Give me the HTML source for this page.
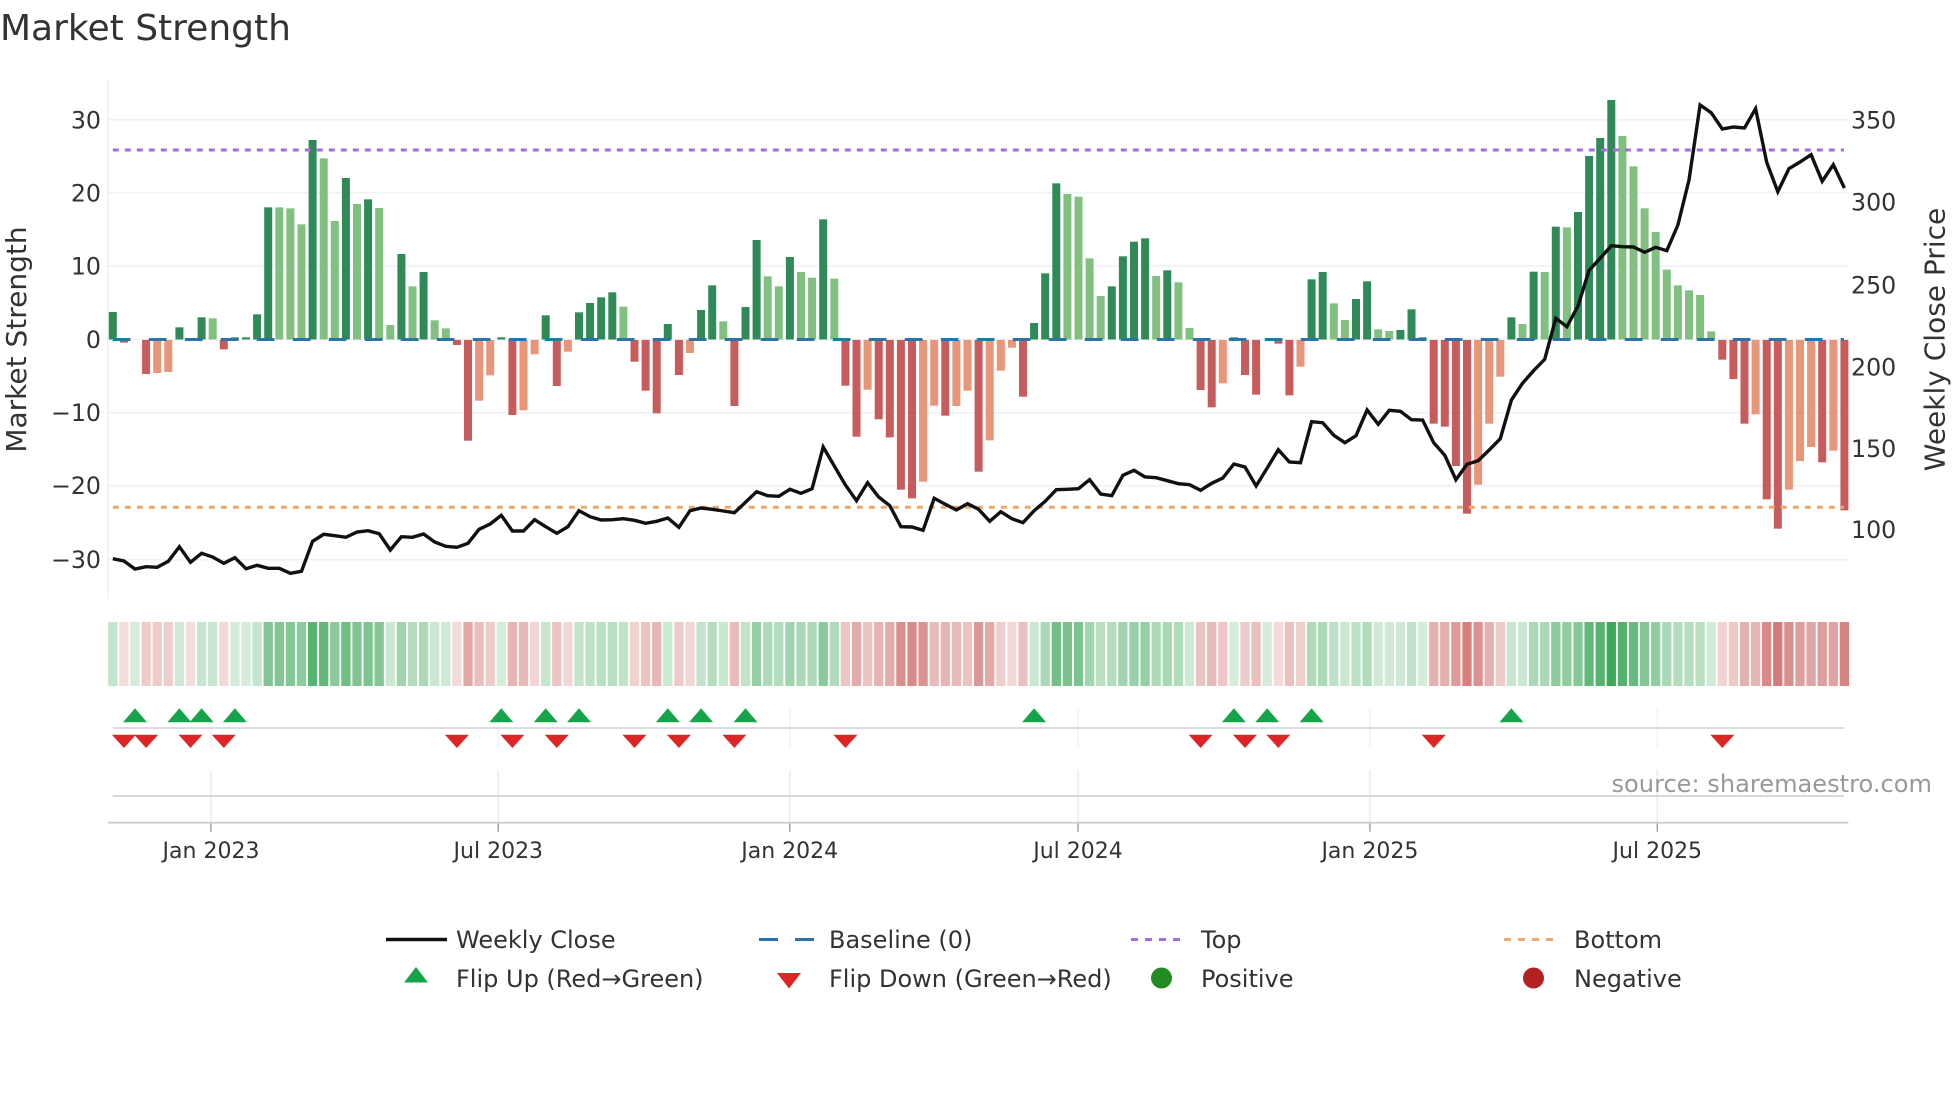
<!DOCTYPE html>
<html>
<head>
<meta charset="utf-8">
<title>Market Strength</title>
<style>
html,body{margin:0;padding:0;background:#fff;width:1960px;height:1102px;overflow:hidden}
svg{display:block}
text{font-family:"DejaVu Sans","Liberation Sans",sans-serif;fill:#333}
.yt{font-size:23.7px}
.xt{font-size:22px;text-anchor:middle}
.lg{font-size:24px}
</style>
</head>
<body>
<svg id="c" xmlns="http://www.w3.org/2000/svg" width="1960" height="1102" viewBox="0 0 1960 1102">
<rect width="1960" height="1102" fill="#fff"/>
<g id="grid"></g>
<g id="bars"></g>
<line x1="112.8" x2="1844" y1="339.5" y2="339.5" stroke="#2a75a8" stroke-width="2.9" stroke-dasharray="17.7 18.3"/>
<line x1="112.8" x2="1844" y1="150" y2="150" stroke="#a56cdc" stroke-width="3" stroke-dasharray="6 6"/>
<line x1="112.8" x2="1844" y1="507.3" y2="507.3" stroke="#eba86f" stroke-width="3" stroke-dasharray="6 6"/>
<polyline id="price" fill="none" stroke="#111" stroke-width="3.4" stroke-linejoin="miter" points=""/>
<g id="heat"></g>
<g id="marks"></g>

<text x="0" y="40" style="font-size:36px">Market Strength</text>
<text transform="translate(26,339.500) rotate(-90)" text-anchor="middle" style="font-size:28px">Market Strength</text>
<text transform="translate(1944.500,339.500) rotate(-90)" text-anchor="middle" style="font-size:28px">Weekly Close Price</text>

<g class="yt" text-anchor="end">
<text x="101" y="128.5">30</text>
<text x="101" y="201.5">20</text>
<text x="101" y="274.5">10</text>
<text x="101" y="348">0</text>
<text x="101" y="421">−10</text>
<text x="101" y="494">−20</text>
<text x="101" y="568">−30</text>
</g>
<g class="yt">
<text x="1851" y="128.6">350</text>
<text x="1851" y="210.4">300</text>
<text x="1851" y="293.4">250</text>
<text x="1851" y="375.4">200</text>
<text x="1851" y="456.8">150</text>
<text x="1851" y="537.8">100</text>
</g>
<g class="xt">
<text x="211" y="858">Jan 2023</text>
<text x="498.3" y="858">Jul 2023</text>
<text x="789.7" y="858">Jan 2024</text>
<text x="1078" y="858">Jul 2024</text>
<text x="1369.9" y="858">Jan 2025</text>
<text x="1657.3" y="858">Jul 2025</text>
</g>
<text x="1611.500" y="792" style="font-size:24.1px;fill:#999">source: sharemaestro.com</text>

<g class="lg">
<text x="456" y="948">Weekly Close</text>
<text x="829" y="948">Baseline (0)</text>
<text x="1201" y="948">Top</text>
<text x="1574" y="948">Bottom</text>
<text x="456" y="987">Flip Up (Red→Green)</text>
<text x="829" y="987">Flip Down (Green→Red)</text>
<text x="1201" y="987">Positive</text>
<text x="1574" y="987">Negative</text>
</g>
<line x1="386" x2="447" y1="939.5" y2="939.5" stroke="#111" stroke-width="3.4"/>
<line x1="759" x2="778" y1="939.5" y2="939.5" stroke="#2a75a8" stroke-width="2.9"/>
<line x1="795" x2="814" y1="939.5" y2="939.5" stroke="#2a75a8" stroke-width="2.9"/>
<line x1="1131" x2="1187" y1="939.5" y2="939.5" stroke="#a56cdc" stroke-width="3" stroke-dasharray="7 7"/>
<line x1="1504" x2="1560" y1="939.5" y2="939.5" stroke="#eba86f" stroke-width="3" stroke-dasharray="7 7"/>
<polygon points="416,967 428,982.500 404,982.500" fill="#16a34a"/>
<polygon points="777,973 801,973 789,988.500" fill="#dc2626"/>
<circle cx="1161.500" cy="978" r="10.500" fill="#228b22"/>
<circle cx="1533.500" cy="978" r="10.500" fill="#b22222"/>
</svg>
<script>
var NS='http://www.w3.org/2000/svg';
function el(parent,name,attrs){var e=document.createElementNS(NS,name);for(var k in attrs)e.setAttribute(k,attrs[k]);document.getElementById(parent).appendChild(e);return e;}
var X0=112.8,P=11.1;
function X(i){return X0+i*P;}
var B=['d936','r38','n','r132','o129','o126','d982','m','d952','l955','r58','d1012','d1012','d943',
'd622','l622','l625','l673','d420','l475','l663','d534','l612','d598','l624','l975','d762','l859','d816','l961','l985',
'r45','r332','o212','o136','d1012','r255','o241','o73','d946','r168','o65','d937','d909','d892','d877','l920','r95','r182','r250',
'd972','r135','o69','d930','d856','l964','r228','d921','d720','l829','l859','d771','l816','l833','d658','l836',
'r167','r320','o179','r268','r322','r479','r505','o455','o227','r257','o228','o182','r425','o331','o122','o53','r200',
'd969','d820','d550','l582','l590','l775','l888','d859','d769','d725','d715','l828','d811','l847','l984',
'r180','r232','o160','d1012','r135','r194','n','r41','r196','o110',
'd838','d816','l910','l960','d897','d844','l988','l993','d990','d928','d1012',
'r281','r290','r408','r551','o464','o281','o140',
'd952','l972','d815','l816','d680','l682','d636','d468','d414','d300','l408','l499','l625','l696','l809','l856','l871','l885','l994',
'r89','r147','r281','o253','r508','r596','o479','o393','o351','r397','o362','r541'];
var L=[686,693,717,710,712,694,650,697,670,681,700,683,716,706,715,715,730,724,634,613,617,622,606,602,611,660,620,622,612,636,649,652,640,598,582,556,603,603,569,590,610,590,542,560,570,569,566,571,580,574,
564,592,542,534,538,543,548,517,485,497,499,478,490,476,351,408,465,512,458,501,527,590,591,601,505,523,540,521,538,574,545,566,578,542,514,479,478,476,449,492,497,436,421,441,443,452,461,464,481,460,444,402,411,468,414,359,396,398,
275,278,316,338,317,240,283,241,244,269,270,338,376,449,403,392,360,326,210,160,122,88];
var L2=[955,980,918,811,775,737,740,741,757,742,752,675,540,315,338,387,381,384,326,487,575,506,486,464,544,494,564];
var col={d:'#2f8a58',l:'#82c082',r:'#c75c5c',o:'#e8967a'};
var Y0=339.5,K=7.33;
B.forEach(function(s,i){
  var t=s[0],v=0;
  if(t==='d'||t==='l'){
    var top=parseInt(s.slice(1),10)/3;
    v=(Y0-top)/K;
    el('bars','rect',{x:X(i)-4,y:top,width:8,height:Y0-top,fill:col[t]});
  }else if(t==='r'||t==='o'){
    var bot=330+parseInt(s.slice(1),10)/3;
    v=-(bot-Y0)/K;
    el('bars','rect',{x:X(i)-4,y:Y0+0.4,width:8,height:bot-Y0-0.4,fill:col[t]});
  }else if(t==='m'){v=-0.01;}
  var a,f;
  if(t==='d'||t==='l'||t==='n'){a=0.21+0.0233*Math.abs(v);f='rgb(56,165,85)';}
  else{a=0.19+0.022*Math.abs(v);f='rgb(196,80,76)';}
  el('heat','rect',{x:X(i)-4.65,y:622,width:9.3,height:64,fill:f,'fill-opacity':Math.min(a,1)});
});
var pts=[];
L.forEach(function(y,i){pts.push(X(i).toFixed(1)+','+(330+y/3).toFixed(1));});
L2.forEach(function(y,i){pts.push(X(130+i).toFixed(1)+','+(y/3).toFixed(1));});
document.getElementById('price').setAttribute('points',pts.join(' '));

[119.7,192.7,266,339.5,412.7,485.7,559.7].forEach(function(y){
  el('grid','line',{x1:107.7,x2:1848.4,y1:y,y2:y,stroke:'#eff1f5','stroke-width':1.6});
});
el('grid','line',{x1:107.7,x2:107.7,y1:80,y2:599,stroke:'#eff1f5','stroke-width':1.6});
[210.9,498.3,789.7,1078,1369.9,1657.3].forEach(function(x){
  el('grid','line',{x1:x,x2:x,y1:708.7,y2:747.7,stroke:'#eff1f5','stroke-width':1.4});
  el('grid','line',{x1:x,x2:x,y1:770,y2:822.7,stroke:'#e8eaef','stroke-width':1.4});
  el('grid','line',{x1:x,x2:x,y1:822.7,y2:831.7,stroke:'#999','stroke-width':1.4});
});
el('grid','line',{x1:112.8,x2:1844,y1:728,y2:728,stroke:'#d6d7dc','stroke-width':1.8});
el('grid','line',{x1:112.8,x2:1844,y1:796,y2:796,stroke:'#d2d2d4','stroke-width':1.8});
el('grid','line',{x1:107.7,x2:1848.4,y1:822.7,y2:822.7,stroke:'#cfcfd2','stroke-width':1.8});
[2,6,8,11,35,39,42,50,53,57,83,101,104,108,126].forEach(function(i){
  var x=X(i);
  el('marks','polygon',{points:x+',708.2 '+(x+12)+',722.3 '+(x-12)+',722.3',fill:'#16a34a'});
});
[1,3,7,10,31,36,40,47,51,56,66,98,102,105,119,145].forEach(function(i){
  var x=X(i);
  el('marks','polygon',{points:(x-12)+',734.7 '+(x+12)+',734.7 '+x+',748',fill:'#dc2626'});
});
</script>
</body>
</html>
